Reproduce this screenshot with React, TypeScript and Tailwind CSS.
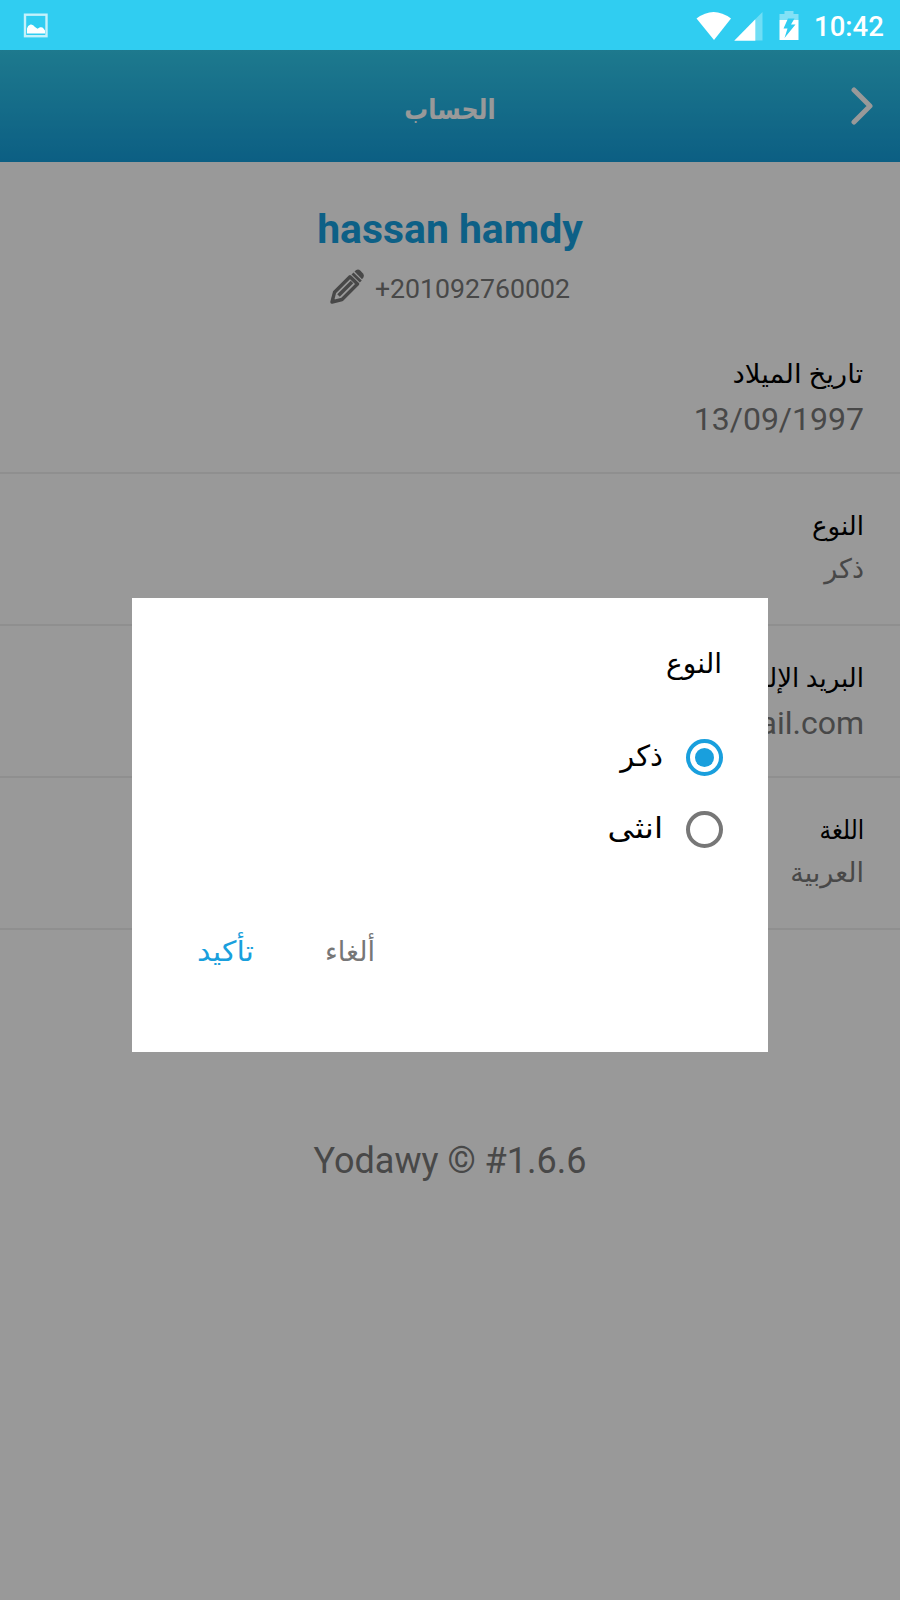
import type { ReactNode } from "react";

function StatusBar() {
  return (
    <div className="flex h-[50px] items-center justify-between bg-[#30cdf1] pl-[23px] pr-[16px] text-white">
      <svg width="25" height="25" viewBox="0 0 25 25" className="mt-px">
        <rect x="2" y="1.700" width="21.500" height="21.500" fill="none" stroke="#c4f1fb" strokeWidth="2.400" />
        <path d="M4 20.500V15.500q.5-3 3.500-4q2.500-.5 4.500 2.500l2.500 1.800 2.500-1.500q2.500-.5 3.500 1.200l1.500 2v3z" fill="white" />
      </svg>
      <div className="flex items-center">
        <svg width="118" height="30" viewBox="0 0 118 30" className="mt-px">
          <path d="M0.500 7.500Q17.500-5.500 35 7.500L18 29Z" fill="white" />
          <path d="M66.500 1V29.500H59V8.500Z" fill="#6fdef5" />
          <path d="M38.200 29.800L59.300 8.300V29.800Z" fill="white" />
          <path d="M83.500 9V3H88.500V0H97.500V3H102.500V9Z" fill="#83e1f6" />
          <path d="M83.500 9H102.500V29H83.500Z" fill="white" />
          <path d="M92 7.500L87.500 17.500H91.500L88.500 27L99.500 13.500H95L98.500 7.500Z" fill="#30cdf1" />
        </svg>
        <span className="w-[70px] whitespace-nowrap pt-[3px] text-[27.500px] font-medium leading-[47px]">10:42</span>
      </div>
    </div>
  );
}

function Row({ label, labelClass, children }: { label: string; labelClass?: string; children: ReactNode }) {
  return (
    <div className="flex h-[152px] flex-col items-end border-b-2 border-[#eeeeee] pr-[36px] pt-[32px]">
      <div dir="rtl" className={`h-[42px] origin-right whitespace-nowrap text-[26px] leading-[40px] text-black ${labelClass ?? ""}`}>
        {label}
      </div>
      <div className="whitespace-nowrap text-[32px] leading-[46px] text-[#787878]">{children}</div>
    </div>
  );
}

function Radio({ label, labelClass, checked }: { label: string; labelClass: string; checked?: boolean }) {
  return (
    <div dir="rtl" className="flex h-[72px] items-center gap-[23px]">
      {checked ? (
        <span className="flex size-[37px] items-center justify-center rounded-full border-4 border-[#199fdd]">
          <span className="size-[19px] rounded-full bg-[#199fdd]" />
        </span>
      ) : (
        <span className="size-[37px] rounded-full border-4 border-[#777777]" />
      )}
      <span className={`origin-right text-[29px] ${labelClass}`}>{label}</span>
    </div>
  );
}

export default function App() {
  return (
    <div className="relative h-[1600px] w-[900px] overflow-hidden bg-white font-[Roboto,'DejaVu_Sans',sans-serif]">
      <StatusBar />
      <header className="flex h-[112px] items-center justify-center bg-linear-to-b from-[#32cbed] to-[#149edb]">
        <div className="w-[100px]" />
        <h1 dir="rtl" className="flex-1 scale-x-[0.85] pt-[7px] text-center text-[28px] font-bold text-white">الحساب</h1>
        <div className="flex w-[100px] justify-end pr-[27px]">
          <svg width="22" height="38" viewBox="0 0 22 38">
            <path d="M3 3L19 19L3 35" fill="none" stroke="white" strokeWidth="5" strokeLinecap="round" strokeLinejoin="round" />
          </svg>
        </div>
      </header>
      <section className="flex h-[160px] flex-col items-center pt-[40px]">
        <div className="text-[40.900px] font-bold leading-[54px] text-[#17a0e0]">hassan hamdy</div>
        <div className="flex h-[60px] items-center gap-[11px] text-[26.700px] text-[#787878]">
          <svg width="34" height="35" viewBox="0 0 34 35" fill="none">
            <path d="M2 33L4.500 23.300L20 7.800L27.500 15L12 30.500Z" stroke="#787878" strokeWidth="3.400" strokeLinejoin="round" />
            <path d="M8.500 26.500L22 13" stroke="#787878" strokeWidth="3.600" />
            <path d="M1 34L2 28L6.500 32.800Z" fill="#787878" />
            <path d="M22.500 4.500L30.800 12.600" stroke="#787878" strokeWidth="2.800" />
            <path d="M24.500 2.500q3-3.500 6-.8l2.300 2.500q2.500 3-.8 6z" fill="#787878" />
          </svg>
          <span className="pt-[6px]">+201092760002</span>
        </div>
      </section>
      <main>
        <Row label="تاريخ الميلاد" labelClass="scale-x-[1.06] pr-px">13/09/1997</Row>
        <Row label="النوع">
          <span dir="rtl" className="block pb-[10px] pt-[3px] text-[27px] leading-[36px]">ذكر</span>
        </Row>
        <Row label="البريد الإلكتروني">hassanhamdy@gmail.com</Row>
        <Row label="اللغة" labelClass="scale-x-[0.89]">
          <span dir="rtl" className="block pb-[10px] pt-[3px] text-[27px] leading-[36px]">العربية</span>
        </Row>
      </main>
      <footer className="mt-[204px] text-center text-[36px] leading-[54px] text-[#787878]">Yodawy © #1.6.6</footer>

      <div className="absolute inset-x-0 bottom-0 top-[50px] bg-black/40" />
      <div className="absolute left-[132px] top-[598px] flex h-[454px] w-[636px] flex-col bg-white pr-[45px] text-black">
        <h2 dir="rtl" className="mt-[42px] h-[81px] pr-px text-[28px] leading-[48px]">النوع</h2>
        <Radio label="ذكر" labelClass="" checked />
        <Radio label="انثى" labelClass="scale-x-[1.13]" />
        <div className="mt-[67px] flex gap-[75px] pl-[65px] text-[28px] leading-[40px]">
          <button dir="rtl" className="origin-left scale-x-[1.08] text-[#199fdd]">تأكيد</button>
          <button dir="rtl" className="origin-left scale-x-[0.97] text-[#777777]">ألغاء</button>
        </div>
      </div>
    </div>
  );
}
